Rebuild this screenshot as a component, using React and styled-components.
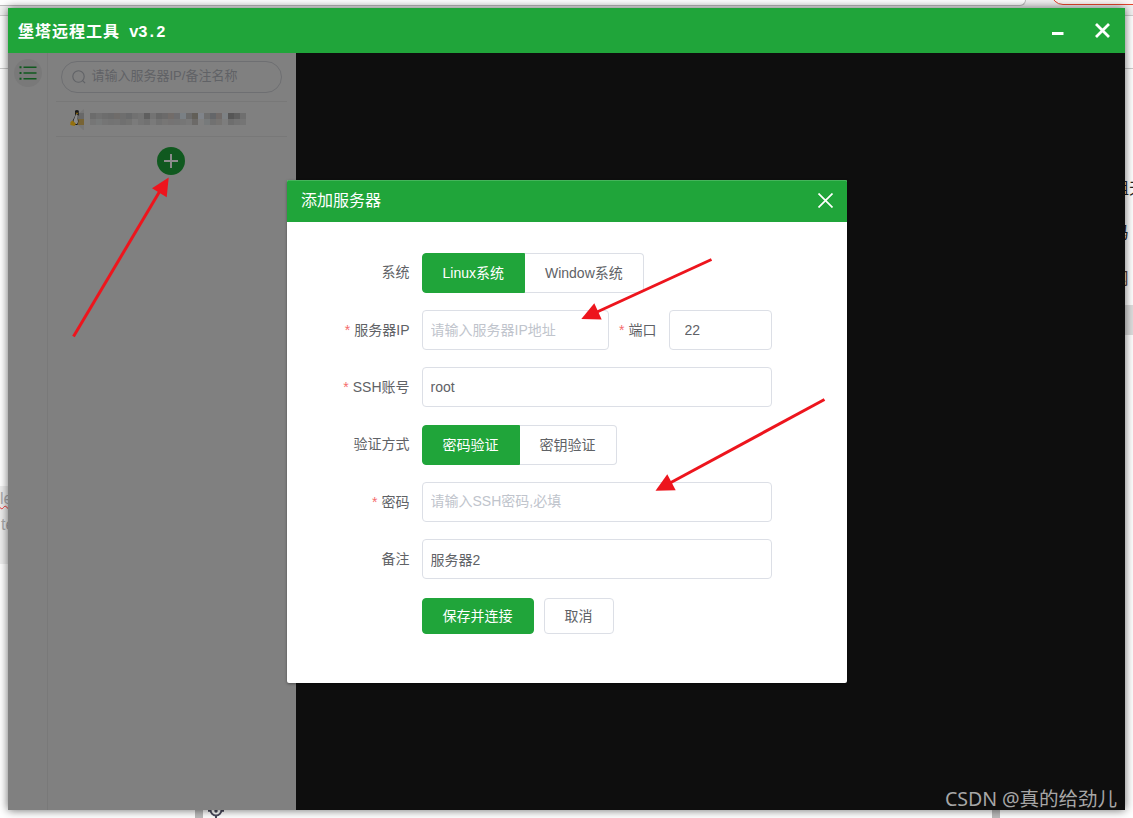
import React, { useState } from "react";
import styled, { createGlobalStyle } from "styled-components";

const GlobalStyle = createGlobalStyle`
  * {
    box-sizing: border-box;
  }

  body {
    margin: 0;
    background: #fff;
    font-family: "Liberation Sans", "Noto Sans CJK SC", sans-serif;
    font-size: 14px;
    color: #606266;
    overflow: hidden;
  }

  button, input {
    font-family: inherit;
    font-size: 14px;
    margin: 0;
    outline: none;
  }
`;

const Desktop = styled.div`
  position: relative;
  width: 1133px;
  height: 818px;
  overflow: hidden;
  display: grid;
  grid-template-columns: 8px 1117px 8px;
  grid-template-rows: 8px 802px 8px;
  background: #fff;
`;

const TopStrip = styled.div`
  grid-column: 1 / 4;
  display: flex;
  justify-content: space-between;
  background: #f1f1f1;
  overflow: hidden;
`;

const AddressBar = styled.div`
  width: 1029px;
  height: 6px;
  margin-left: -3px;
  background: #fff;
  border-bottom: 1px solid #bdbdbd;
  border-right: 1px solid #bdbdbd;
  border-radius: 0 0 12px 0;
`;

const UpdatePill = styled.div`
  width: 102px;
  height: 24px;
  margin: -19px -20px 0 0;
  background: #fdf6f5;
  border: 1px solid #e8452c;
  border-radius: 12px;
`;

const Edge = styled.div`
  overflow: hidden;
  background: #fff;
`;

const EdgeBar = styled.div`
  height: ${(p) => p.$height}px;
  margin-top: ${(p) => p.$top || 0}px;
  background: ${(p) => p.$bg || "#fff"};
  border-top: ${(p) => (p.$line ? "1px solid #ccc" : "none")};
  border-bottom: ${(p) => (p.$line ? "1px solid #ccc" : "none")};
`;

const EdgeText = styled.div`
  height: ${(p) => p.$height}px;
  line-height: ${(p) => p.$height}px;
  margin-left: ${(p) => p.$shift}px;
  font-size: 16px;
  white-space: nowrap;
  color: ${(p) => p.$color || "#222"};
  text-decoration: ${(p) => (p.$wavy ? "underline wavy #e33 1px" : "none")};
`;

const BottomStrip = styled.div`
  grid-column: 1 / 4;
  display: flex;
  overflow: hidden;
  padding-left: 195px;
`;

const Thumb = styled.div`
  width: 8px;
  height: 8px;
  background: #bbb;
`;

const TargetIcon = styled.svg`
  margin: -8px 0 0 5px;
  width: 16px;
  height: 16px;
  flex: none;
  & + ${Thumb} {
    margin-left: 768px;
  }
`;

const Window = styled.div`
  position: relative;
  display: flex;
  flex-direction: column;
  box-shadow: 0 0 9px rgba(0, 0, 0, 0.6);
`;

const TitleBar = styled.div`
  height: 45px;
  padding: 0 14px 0 10px;
  display: flex;
  align-items: center;
  background: #20a53a;
  color: #fff;
  font-weight: bold;
`;

const AppName = styled.div`
  flex: 1;
  display: flex;
  align-items: center;
  gap: 9px;
  font-size: 16px;
  letter-spacing: 1px;

  span:first-child {
    margin-top: -2px;
  }
`;

const Version = styled.span`
  padding-top: 4px;
  font-family: "Liberation Mono", monospace;
  font-size: 16px;
  letter-spacing: -0.6px;
`;

const WindowControls = styled.div`
  display: flex;
  align-items: center;
  gap: 30px;
`;

const Body = styled.div`
  flex: 1;
  display: flex;
`;

const Rail = styled.div`
  width: 40px;
  padding: 6px 0 0 6px;
  background: #808080;
  border-right: 1px solid #797979;
`;

const RailButton = styled.div`
  width: 28px;
  height: 28px;
  border-radius: 50%;
  background: #797979;
  display: flex;
  align-items: center;
  justify-content: center;
`;

const Sidebar = styled.div`
  width: 248px;
  padding: 8px 9px 0 8px;
  background: #808080;
`;

const SearchBox = styled.div`
  width: 221px;
  height: 32px;
  margin: 0 0 8px 5px;
  padding-left: 10px;
  display: flex;
  align-items: center;
  gap: 5.5px;
  border: 1px solid #6e6f72;
  border-radius: 16px;
  font-size: 13px;
  line-height: 30px;
  color: #606266;

  span {
    margin-top: -2px;
  }
`;

const ServerRow = styled.div`
  height: 36px;
  padding: 0 0 1px 14px;
  display: flex;
  align-items: center;
  gap: 5px;
  border-top: 1px solid #787878;
  border-bottom: 1px solid #787878;
`;

const Mosaic = styled.div`
  display: grid;
  grid-template-columns: repeat(26, 6px);
  grid-auto-rows: 6px;
`;

const Cell = styled.i`
  background: ${(p) => p.$color};
`;

const AddButton = styled.div`
  width: 28px;
  height: 28px;
  margin: 10px 0 0 101.4px;
  border-radius: 50%;
  background: #10591f;
  display: flex;
  align-items: center;
  justify-content: center;
`;

const Terminal = styled.div`
  flex: 1;
  background: #0e0e0e;
`;

const Dialog = styled.div`
  position: absolute;
  left: 279px;
  top: 172px;
  width: 560px;
  height: 503px;
  background: #fff;
  border-radius: 2px;
  overflow: hidden;
  box-shadow: 0 1px 3px rgba(0, 0, 0, 0.4);
`;

const DialogHeader = styled.div`
  height: 42px;
  padding: 0 14px 2px;
  display: flex;
  align-items: center;
  justify-content: space-between;
  background: #20a53a;
  border-top: 1px solid #45b45b;
  font-size: 16px;
  line-height: 24px;
  color: #fff;

  svg {
    margin-top: -1px;
  }
`;

const Form = styled.div`
  padding: 31px 75px 0 0;
`;

const FormRow = styled.div`
  height: 57.2px;
  display: flex;
  align-items: flex-start;
`;

const Label = styled.label`
  width: ${(p) => p.$width || 135}px;
  padding-right: 12.5px;
  line-height: ${(p) => (p.$choice ? 39 : 40)}px;
  text-align: right;
  white-space: nowrap;
  flex: none;

  &::before {
    content: "${(p) => (p.$required ? "*" : "")}";
    color: #f56c6c;
    margin-right: 4px;
  }
`;

const Input = styled.input`
  width: ${(p) => p.$width || 350}px;
  height: 40px;
  padding: 0 8px 0.6px ${(p) => p.$indent || 7.5}px;
  border: 1px solid #dcdfe6;
  border-radius: 4px;
  background: #fff;
  color: #606266;

  &::placeholder {
    color: #c0c4cc;
  }
`;

const RadioGroup = styled.div`
  display: flex;
`;

const RadioButton = styled.button`
  height: 40px;
  padding: 0 20.5px 2px 19.5px;
  border: 1px solid ${(p) => (p.$active ? "#20a53a" : "#dcdfe6")};
  background: ${(p) => (p.$active ? "#20a53a" : "#fff")};
  color: ${(p) => (p.$active ? "#fff" : "#606266")};

  &:first-child {
    border-radius: 4px 0 0 4px;
  }
  &:last-child {
    border-left: 0;
    border-radius: 0 4px 4px 0;
  }
`;

const Actions = styled.div`
  display: flex;
  gap: 10px;
  padding: 1.8px 0 0 135px;
`;

const Button = styled.button`
  height: 36px;
  padding: 0 20.5px 2px 19.5px;
  border: 1px solid ${(p) => (p.$primary ? "#20a53a" : "#dcdfe6")};
  border-radius: 4px;
  background: ${(p) => (p.$primary ? "#20a53a" : "#fff")};
  color: ${(p) => (p.$primary ? "#fff" : "#606266")};
`;

const Arrows = styled.svg`
  position: absolute;
  left: 0;
  top: 0;
  pointer-events: none;
`;

const Watermark = styled.div`
  position: absolute;
  right: 16px;
  bottom: 5px;
  font-family: "Noto Sans", "Noto Sans CJK SC", sans-serif;
  font-size: 19.6px;
  line-height: 28px;
  letter-spacing: -0.1px;
  color: #a6a6a6;
  white-space: nowrap;
`;

const mosaic = [
  "#6c6c6c", "#717171", "#6d6d6d", "#6b6b6b", "#6f6c6a", "#6e6e6e", "#696a6b", "#717171", "#747474",
  "#5f5f5f", "#737373", "#676767", "#6b6a6a", "#726c69", "#6d6d6f", "#7a8085", "#6b6b6b", "#625f58",
  "#80848a", "#6f6f6f", "#646669", "#716b69", "#7d8184", "#565656", "#5f5f5f", "#6f6f6f",
  "#767676", "#787a7a", "#757575", "#737373", "#747474", "#707070", "#737372", "#7b7b7b", "#757575",
  "#717171", "#7a7a7a", "#727272", "#777675", "#757373", "#747474", "#767676", "#797979", "#6c6a68",
  "#808080", "#777a7b", "#717171", "#767472", "#7d7d7d", "#6e6e6e", "#737373", "#757575",
];

const arrows = [
  { line: [73.5, 336.5, 160.5, 190], head: "168.7,177.5 152,188.3 166.7,197.3" },
  { line: [711.5, 259.5, 597, 312], head: "581.3,318.9 594.3,303.3 601.7,319.5" },
  { line: [824.5, 399.5, 670, 483], head: "655.5,490.8 667.3,474.3 675.7,490.2" },
];

function ListIcon() {
  return (
    <svg width="18" height="14" viewBox="0 0 18 14" fill="none" stroke="#10591f" strokeWidth="1.4">
      <path d="M4.5 1.2h13M4.5 7h13M4.5 12.8h13" />
      <path d="M.5 1.2h2M.5 7h2M.5 12.8h2" strokeWidth="2" />
    </svg>
  );
}

function Tux() {
  return (
    <svg width="15" height="22" viewBox="0 0 15 22">
      <path d="M8 6l6-5v22l-6-6z" fill="#777" />
      <path d="M8 5h6v6H8z" fill="#686868" />
      <path d="M8 11h6v6H8z" fill="#786435" />
      <path d="M5 2.8q2-1.8 3.8 0v4L7.5 9l1 4-1 4H3l-1-3 3-6z" fill="#181818" />
      <path d="M6 6l1.8 1-.3 3 .5 4-1 2H4.5L3.4 13z" fill="#8b8b8b" />
      <path d="M5.5 4.7h3L7 6.4z" fill="#967013" />
      <path d="M.5 14l2-1.5L6 15.7 4.5 18 .3 17z" fill="#94700c" />
    </svg>
  );
}

function AddServerDialog() {
  const [system, setSystem] = useState("linux");
  const [auth, setAuth] = useState("password");

  return (
    <Dialog>
      <DialogHeader>
        <span>添加服务器</span>
        <svg width="15" height="15" viewBox="0 0 15 15" stroke="#fff" strokeWidth="1.7">
          <path d="M.5.5l14 14M14.5.5l-14 14" />
        </svg>
      </DialogHeader>
      <Form>
        <FormRow>
          <Label $choice>系统</Label>
          <RadioGroup>
            <RadioButton $active={system === "linux"} onClick={() => setSystem("linux")}>
              Linux系统
            </RadioButton>
            <RadioButton $active={system === "window"} onClick={() => setSystem("window")}>
              Window系统
            </RadioButton>
          </RadioGroup>
        </FormRow>
        <FormRow>
          <Label $required>服务器IP</Label>
          <Input $width={187} placeholder="请输入服务器IP地址" />
          <Label $required $width={60}>端口</Label>
          <Input $width={103} $indent={14.5} defaultValue="22" />
        </FormRow>
        <FormRow>
          <Label $required>SSH账号</Label>
          <Input defaultValue="root" />
        </FormRow>
        <FormRow>
          <Label $choice>验证方式</Label>
          <RadioGroup>
            <RadioButton $active={auth === "password"} onClick={() => setAuth("password")}>
              密码验证
            </RadioButton>
            <RadioButton $active={auth === "key"} onClick={() => setAuth("key")}>
              密钥验证
            </RadioButton>
          </RadioGroup>
        </FormRow>
        <FormRow>
          <Label $required>密码</Label>
          <Input placeholder="请输入SSH密码,必填" />
        </FormRow>
        <FormRow>
          <Label>备注</Label>
          <Input defaultValue="服务器2" />
        </FormRow>
        <Actions>
          <Button $primary>保存并连接</Button>
          <Button>取消</Button>
        </Actions>
      </Form>
    </Dialog>
  );
}

export default function App() {
  return (
    <>
      <GlobalStyle />
      <Desktop>
        <TopStrip>
          <AddressBar />
          <UpdatePill />
        </TopStrip>
        <Edge>
          <EdgeBar $height={7} $bg="#f1f1f1" />
          <EdgeBar $height={54} $line />
          <EdgeBar $height={78} $top={417} $bg="#eee">
            <EdgeText $height={26} $shift={0} $color="#aaa" $wavy>le</EdgeText>
            <EdgeText $height={26} $shift={1} $color="#aaa">te</EdgeText>
          </EdgeBar>
        </Edge>
        <Window>
          <TitleBar>
            <AppName>
              <span>堡塔远程工具</span>
              <Version>v3.2</Version>
            </AppName>
            <WindowControls>
              <svg width="12" height="15" viewBox="0 0 12 15">
                <path d="M0 9h11.5v3H0z" fill="#fff" />
              </svg>
              <svg width="17" height="17" viewBox="0 0 17 17" stroke="#fff" strokeWidth="2.8">
                <path d="M2 2l13 13M15 2L2 15" />
              </svg>
            </WindowControls>
          </TitleBar>
          <Body>
            <Rail>
              <RailButton>
                <ListIcon />
              </RailButton>
            </Rail>
            <Sidebar>
              <SearchBox>
                <svg width="14" height="14" viewBox="0 0 14 14" fill="none" stroke="#606266" strokeWidth="1.1">
                  <circle cx="6.5" cy="6.5" r="5.7" />
                  <path d="M10.6 10.6l2.5 2.5" />
                </svg>
                <span>请输入服务器IP/备注名称</span>
              </SearchBox>
              <ServerRow>
                <Tux />
                <Mosaic>
                  {mosaic.map((color, i) => (
                    <Cell key={i} $color={color} />
                  ))}
                </Mosaic>
              </ServerRow>
              <AddButton>
                <svg width="14" height="14" viewBox="0 0 14 14" stroke="#8c8c8c" strokeWidth="2">
                  <path d="M7 0v14M0 7h14" />
                </svg>
              </AddButton>
            </Sidebar>
            <Terminal />
          </Body>
          <AddServerDialog />
        </Window>
        <Edge>
          <EdgeBar $height={7} $bg="#f1f1f1" />
          <EdgeBar $height={54} $line />
          <EdgeBar $height={107} />
          <EdgeText $height={26} $shift={-12}>组天</EdgeText>
          <EdgeText $height={62} $shift={-12.5}>码</EdgeText>
          <EdgeText $height={30} $shift={-12.5} $color="#5a4030">网</EdgeText>
          <EdgeBar $height={30} $top={11} $bg="#ddd" />
        </Edge>
        <BottomStrip>
          <Thumb />
          <TargetIcon viewBox="0 0 16 16" fill="none" stroke="#4a4a5c" strokeWidth="2">
            <circle cx="8" cy="8" r="5.5" />
            <circle cx="8" cy="9" r="1.7" fill="#4a4a5c" stroke="none" />
            <path d="M8 13v3M0 8.8h3M13 8.8h3" />
          </TargetIcon>
          <Thumb />
        </BottomStrip>
        <Arrows width="1133" height="818">
          {arrows.map(({ line, head }) => (
            <g key={head} fill="#ed151d">
              <line x1={line[0]} y1={line[1]} x2={line[2]} y2={line[3]} stroke="#ed151d" strokeWidth="3" />
              <polygon points={head} />
            </g>
          ))}
        </Arrows>
        <Watermark>CSDN @真的给劲儿</Watermark>
      </Desktop>
    </>
  );
}
